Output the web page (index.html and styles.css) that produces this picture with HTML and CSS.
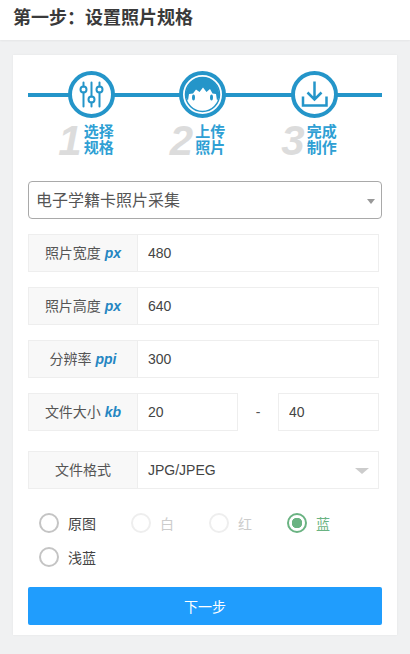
FILE: index.html
```html
<!DOCTYPE html>
<html lang="zh">
<head>
<meta charset="utf-8">
<title>设置照片规格</title>
<link rel="stylesheet" href="styles.css">
</head>
<body>
<header class="top"><h1>第一步：设置照片规格</h1></header>
<main class="card">
  <section class="steps">
    <div class="step">
      <svg class="ico" viewBox="0 0 47 47">
        <circle cx="23.5" cy="23.5" r="21.5" fill="#fff" stroke="#2495c9" stroke-width="4"/>
        <g fill="none" stroke="#2495c9" stroke-width="2" stroke-linecap="round">
          <path d="M15.5 11.500v4M15.5 21.500V35.500M23.500 11.500v14M23.500 31.500v4M31.500 11.500v4M31.500 21.500V35.500"/>
          <circle cx="15.500" cy="18.500" r="3"/>
          <circle cx="23.500" cy="28.500" r="3"/>
          <circle cx="31.500" cy="18.500" r="3"/>
        </g>
      </svg>
      <div class="cap"><span class="num">1</span><span class="txt">选择<br>规格</span></div>
    </div>
    <div class="step">
      <svg class="ico" viewBox="0 0 47 47">
        <circle cx="23.500" cy="23.500" r="21.500" fill="#fff" stroke="#2495c9" stroke-width="4"/>
        <circle cx="23.500" cy="23.500" r="17" fill="#fff" stroke="#2495c9" stroke-width="1.500"/>
        <path d="M6.500 26C6.500 14 14 6.500 23.500 6.500S40.500 14 40.500 26L38 29.500 37 23 33.500 22.500 31 18 27.500 21 24 16.500 20.500 21 17 18.500 14 22.500 10 23 9 29.500Z" fill="#2495c9"/>
        <ellipse cx="14.500" cy="26.500" rx="1.500" ry="3" fill="#2495c9"/>
        <ellipse cx="32.500" cy="26.500" rx="1.500" ry="3" fill="#2495c9"/>
      </svg>
      <div class="cap"><span class="num">2</span><span class="txt">上传<br>照片</span></div>
    </div>
    <div class="step">
      <svg class="ico" viewBox="0 0 47 47">
        <circle cx="23.500" cy="23.500" r="21.500" fill="#fff" stroke="#2495c9" stroke-width="4"/>
        <g fill="none" stroke="#2495c9" stroke-width="2.500">
          <path d="M23.500 10.500V28M16.500 21.500l7 7 7-7"/>
          <path d="M12 25.500V34.500H35.500V25.500"/>
        </g>
      </svg>
      <div class="cap"><span class="num">3</span><span class="txt">完成<br>制作</span></div>
    </div>
  </section>

  <div class="preset">
    <span class="preset-text">电子学籍卡照片采集</span>
    <i class="caret-small"></i>
  </div>

  <div class="row"><label class="lab">照片宽度 <b>px</b></label><input class="val" value="480"></div>
  <div class="row"><label class="lab">照片高度 <b>px</b></label><input class="val" value="640"></div>
  <div class="row"><label class="lab">分辨率 <b>ppi</b></label><input class="val" value="300"></div>
  <div class="row">
    <label class="lab">文件大小 <b>kb</b></label>
    <input class="val short" value="20">
    <span class="dash">-</span>
    <input class="val short end" value="40">
  </div>
  <div class="row format">
    <label class="lab">文件格式</label>
    <div class="val fake">JPG/JPEG<i class="caret"></i></div>
  </div>

  <div class="radios">
    <span class="radio"><i class="dot"></i>原图</span>
    <span class="radio off"><i class="dot"></i>白</span>
    <span class="radio off"><i class="dot"></i>红</span>
    <span class="radio on"><i class="dot"></i>蓝</span>
    <span class="radio"><i class="dot"></i>浅蓝</span>
  </div>

  <button class="next">下一步</button>
</main>
</body>
</html>
```

FILE: styles.css
```css
* { box-sizing: border-box; }
html, body { margin: 0; height: 654px; overflow: hidden; }
body {
  background: #f0f1f2;
  font-family: "Liberation Sans", "Noto Sans CJK SC", sans-serif;
  color: #333;
}
.top {
  height: 40px;
  background: #fff;
  padding-left: 13px;
  box-shadow: 0 1px 2px rgba(0,0,0,.05);
}
.top h1 {
  margin: 0;
  font-size: 18px;
  line-height: 37px;
  font-weight: 700;
  color: #3a3a3a;
}
.card {
  width: 384px;
  height: 580px;
  margin: 15px 0 0 13px;
  padding: 16px 15px 0;
  background: #fff;
  box-shadow: 0 0 2px rgba(0,0,0,.06);
}
.steps {
  display: flex;
  height: 110px;
  padding-left: 39.500px;
  gap: 64.500px;
  background: linear-gradient(#2495c9, #2495c9) no-repeat 0 22px / 100% 4px;
}
.step { width: 47px; display: flex; flex-direction: column; align-items: center; }
.ico { width: 47px; height: 47px; display: block; flex: none; }
.cap { display: flex; align-items: flex-end; margin-left: -10px; height: 35px; margin-top: 3px; white-space: nowrap; }
.num {
  font-size: 42px;
  line-height: 42px;
  font-weight: 700;
  font-style: italic;
  color: #dcdcdc;
  margin: 0 2px -6px 0;
}
.txt { font-size: 15px; line-height: 16px; font-weight: 700; color: #2f9fd4; }
.preset {
  position: relative;
  height: 38px;
  border: 1px solid #a9a9a9;
  border-radius: 4px;
  padding-left: 7px;
  font-size: 16px;
  line-height: 37px;
  color: #555;
  margin-bottom: 15px;
}
.caret-small {
  position: absolute;
  right: 6px;
  top: 17px;
  border: 4px solid transparent;
  border-top: 5px solid #999;
  border-bottom: 0;
}
.row {
  display: flex;
  width: 351px;
  height: 38px;
  margin-bottom: 15px;
}
.row.format { margin-top: 20px; }
.lab {
  width: 110px;
  flex: none;
  background: #f8f8f8;
  border: 1px solid #eee;
  text-align: center;
  font-size: 14px;
  line-height: 36px;
  color: #555;
}
.lab b { color: #2586c2; font-style: italic; font-weight: 700; }
.val {
  flex: 1;
  min-width: 0;
  border: 1px solid #eee;
  border-left: 0;
  padding: 0 0 0 10px;
  font: 14px/36px "Liberation Sans", "Noto Sans CJK SC", sans-serif;
  color: #444;
  background: #fff;
  outline: 0;
}
.val.short { flex: none; width: 100px; }
.val.end { width: 101px; border-left: 1px solid #eee; }
.dash { width: 40px; text-align: center; font-size: 14px; line-height: 38px; color: #555; }
.fake { position: relative; }
.caret {
  position: absolute;
  right: 9px;
  top: 16px;
  border: 7px solid transparent;
  border-top: 6px solid #ccc;
  border-bottom: 0;
}
.radios {
  display: flex;
  flex-wrap: wrap;
  padding: 3px 0 0 11px;
  margin-top: -1px;
}
.radio {
  display: flex;
  align-items: center;
  height: 34px;
  margin-right: 35px;
  font-size: 14px;
  color: #444;
}
.dot {
  width: 20px;
  height: 20px;
  margin-right: 9px;
  border: 2px solid #c4c4c4;
  border-radius: 50%;
  background: #fff;
}
.radio.off { color: #ccc; }
.radio.off .dot { border-color: #eee; }
.radio.on { color: #6ab382; }
.radio.on .dot {
  border-color: #6ab382;
  background: radial-gradient(circle, #6ab382 0 5px, #fff 5.500px);
}
.next {
  display: block;
  width: 354px;
  height: 38px;
  margin-top: 13px;
  border: 0;
  border-radius: 2px;
  background: #209dfd;
  color: #fff;
  font: 14px "Liberation Sans", "Noto Sans CJK SC", sans-serif;
}
```
